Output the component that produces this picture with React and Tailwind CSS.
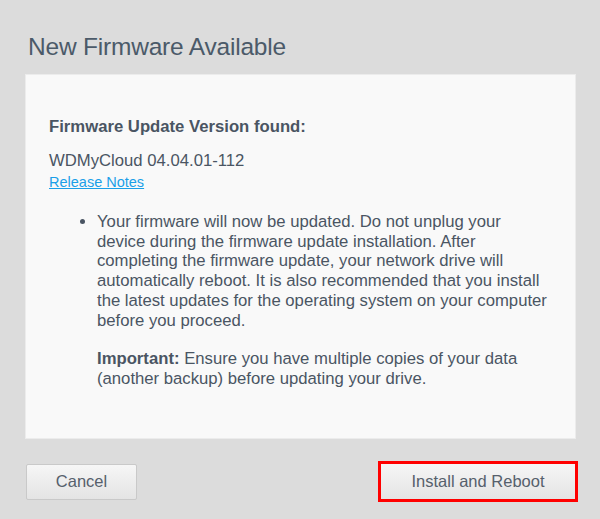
export default function App() {
  return (
    <div
      className="w-[600px] h-[519px] bg-[#dcdcdc] flex flex-col overflow-hidden"
      style={{ fontFamily: '"Liberation Sans", Arial, sans-serif' }}
    >
      <h1 className="pl-[28px] pt-[32px] text-[24.5px] leading-[30px] text-[#4b5a69] tracking-[-0.2px]">
        New Firmware Available
      </h1>
      <div className="mt-[12px] ml-[25px] w-[551px] h-[365px] bg-[#f9f9f9] border border-[#ececec] pl-[23px] pt-[42px] text-[#4a5563]">
        <div className="text-[16.7px] leading-[20px] font-bold">
          Firmware Update Version found:
        </div>
        <div className="mt-[14px] text-[16.7px] leading-[20px]">
          WDMyCloud 04.04.01-112
        </div>
        <a
          href="#"
          className="block mt-[2.5px] w-fit text-[14.5px] leading-[17px] text-[#1a9fe8] underline"
        >
          Release Notes
        </a>
        <ul className="mt-[21.5px] ml-[48px] w-[454px] text-[16.7px] leading-[19.7px] list-disc">
          <li>
            Your firmware will now be updated. Do not unplug your device during the firmware update installation. After completing the firmware update, your network drive will automatically reboot. It is also recommended that you install the latest updates for the operating system on your computer before you proceed.
            <p className="mt-[18.8px]">
              <span className="font-bold">Important:</span> Ensure you have multiple copies of your data (another backup) before updating your drive.
            </p>
          </li>
        </ul>
      </div>
      <div className="flex justify-between items-center mt-[22px] pl-[26px] pr-[22px]">
        <button className="w-[111px] h-[36px] border border-[#c9c9c9] bg-gradient-to-b from-[#f6f6f6] to-[#e4e4e4] text-[16.5px] text-[#56606c] rounded-[2px]">
          Cancel
        </button>
        <button className="w-[200px] h-[41px] border-[3px] border-[#ff0000] bg-gradient-to-b from-[#f6f6f6] to-[#e4e4e4] text-[16.5px] text-[#56606c]">
          Install and Reboot
        </button>
      </div>
    </div>
  );
}
